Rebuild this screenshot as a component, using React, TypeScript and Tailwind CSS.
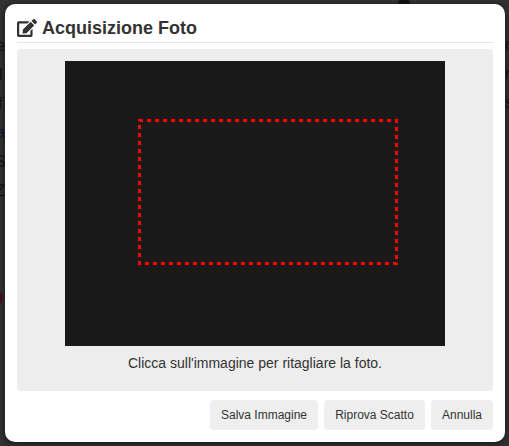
import React from "react";

function EditIcon() {
  return (
    <svg viewBox="0 0 576 512" className="h-[18px] w-[20px] shrink-0" fill="#333333">
      <path d="M402.6 83.2l90.2 90.2c3.8 3.8 3.8 10 0 13.8L274.4 405.6l-92.8 10.3c-12.4 1.4-22.9-9.1-21.5-21.5l10.3-92.8L388.8 83.2c3.8-3.8 10-3.8 13.8 0zm162-22.9l-48.8-48.8c-15.2-15.2-39.9-15.2-55.2 0l-35.4 35.4c-3.8 3.8-3.8 10 0 13.8l90.2 90.2c3.8 3.8 10 3.8 13.8 0l35.4-35.4c15.2-15.3 15.2-40 0-55.2zM384 346.2V448H64V128h229.8c3.2 0 6.2-1.3 8.5-3.5l40-40c7.6-7.6 2.2-20.5-8.5-20.5H48C21.5 64 0 85.5 0 112v352c0 26.5 21.5 48 48 48h352c26.5 0 48-21.5 48-48V306.2c0-10.7-12.9-16-20.5-8.5l-40 40c-2.2 2.3-3.5 5.3-3.5 8.5z" />
    </svg>
  );
}

export default function App() {
  return (
    <div className="relative h-[446px] w-[509px] overflow-hidden bg-[#323232] font-['Liberation_Sans',Arial,sans-serif]">
      {/* page dimmed behind the dialog */}
      <div className="flex h-full justify-between text-[16px] leading-[29px] text-[#141414]">
        <div className="w-[60px] overflow-hidden whitespace-nowrap">
          <div className="pl-[5px] pt-[1px] text-[#0c1a33]">Mate</div>
          <div className="-ml-[4px] mt-[1px]">e</div>
          <div className="-ml-[1px]">l</div>
          <div className="-ml-[2px]">f</div>
          <div className="-ml-[4px] text-[#0c1a33]">a</div>
          <div className="-ml-[5px]">S</div>
          <div className="-ml-[5px]">Z</div>
          <div className="mt-[88px] h-[10px] w-[2px] bg-[#4a0d16]" />
        </div>
        <div className="w-[60px] overflow-hidden whitespace-nowrap pl-[56px] pt-[30px]">
          <div>n</div>
          <div>r</div>
          <div>s</div>
        </div>
      </div>
      <div className="absolute left-[392px] top-0 flex h-[4px] w-[24px] justify-center border-x border-[#3a3a3a]">
        <div className="h-[4px] w-[12px] rounded-t-[3px] bg-[#141414]" />
      </div>

      {/* dialog */}
      <div className="absolute left-[5px] top-[4px] flex h-[438px] w-[500px] flex-col rounded-[10px] bg-white px-3 shadow-[0_1px_6px_rgba(0,0,0,0.65)]">
        <div className="flex h-[39px] items-center gap-[5px] border-b border-[#e5e5e5] pt-[9px]">
          <EditIcon />
          <h1 className="text-[18px] font-bold leading-none text-[#333333]">Acquisizione Foto</h1>
        </div>
        <div className="mt-[6px] flex h-[342px] flex-col items-center rounded-[4px] bg-[#ededed] pt-3">
          <div className="relative h-[285px] w-[380px] bg-[#191919]">
            <svg className="absolute inset-0" width="380" height="285" fill="none">
              <rect x="74.5" y="59.5" width="257" height="143" stroke="#ff0000" strokeWidth="3" strokeDasharray="4 4" strokeDashoffset="0.5" />
            </svg>
          </div>
          <p className="mt-[9px] text-[14px] leading-4 text-[#333333]">Clicca sull'immagine per ritagliare la foto.</p>
        </div>
        <div className="mt-[9px] flex justify-end gap-[6px]">
          <button className="h-[30px] w-[108px] rounded-[4px] bg-[#efefef] text-[12px] text-[#333333]">Salva Immagine</button>
          <button className="h-[30px] w-[101px] rounded-[4px] bg-[#efefef] text-[12px] text-[#333333]">Riprova Scatto</button>
          <button className="h-[30px] w-[62px] rounded-[4px] bg-[#efefef] text-[12px] text-[#333333]">Annulla</button>
        </div>
      </div>
    </div>
  );
}
